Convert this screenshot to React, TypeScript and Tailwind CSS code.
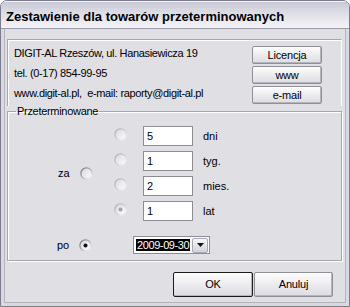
import React from "react";

function Radio({ checked = false, disabled = false }: { checked?: boolean; disabled?: boolean }) {
  const id = disabled ? "rd" : "re";
  return (
    <svg width="13" height="13" viewBox="0 0 13 13" className="shrink-0">
      <defs>
        <linearGradient id={id + "s"} x1="0" y1="0" x2="1" y2="1">
          <stop offset="0" stopColor={disabled ? "#a9a9b2" : "#6f6f7c"} />
          <stop offset="0.55" stopColor={disabled ? "#d2d2d8" : "#b8b8c2"} />
          <stop offset="1" stopColor="#ffffff" />
        </linearGradient>
        <linearGradient id={id + "f"} x1="0" y1="0" x2="1" y2="1">
          <stop offset="0" stopColor="#d6d6dc" />
          <stop offset="1" stopColor="#ffffff" />
        </linearGradient>
      </defs>
      <circle cx="6.5" cy="6.5" r="5.6" fill={`url(#${id}f)`} stroke={`url(#${id}s)`} strokeWidth="1.3" />
      {checked && <circle cx="6.5" cy="6.5" r="2" fill={disabled ? "#a4a4ac" : "#111111"} />}
    </svg>
  );
}

function Btn({ label, w, h, def = false }: { label: string; w: string; h: string; def?: boolean }) {
  return (
    <button
      className={`${w} ${h} flex items-center justify-center rounded-[2px] bg-gradient-to-b from-[#fdfdfd] to-[#dcdce2] text-[11px] text-black tracking-[-0.2px] shadow-[inset_-1px_-1px_0_#b5b5bd] ${
        def ? "border border-[#1a1a1a]" : "border border-[#8f8f98]"
      }`}
    >
      {label}
    </button>
  );
}

function Edit({ value }: { value: string }) {
  return (
    <div className="w-[50px] h-[20px] bg-white border border-[#8d8d96] flex items-center pl-[3px] text-[11px]">
      {value}
    </div>
  );
}

export default function App() {
  const rows = [
    { v: "5", u: "dni" },
    { v: "1", u: "tyg." },
    { v: "2", u: "mies." },
    { v: "1", u: "lat", on: true },
  ];

  return (
    <div
      className="w-[350px] h-[307px] flex flex-col rounded-t-[7px] border border-[#7c7c8e] bg-[#e0dfe3] overflow-hidden text-black"
      style={{ fontFamily: '"Liberation Sans", Arial, sans-serif' }}
    >
      {/* title bar */}
      <div className="h-[28px] shrink-0 flex items-center pl-[5px] pt-[4px] bg-gradient-to-b from-[#c8c8d6] via-[#e0e0e8] to-[#f4f4f7] border-b border-[#9c9cac] shadow-[inset_0_1px_0_#f4f4f8]">
        <span className="text-[13px] font-bold">Zestawienie dla towarów przeterminowanych</span>
      </div>

      {/* body */}
      <div className="flex-1 flex flex-col border-x-[3px] border-b-[3px] border-[#d9d9e1] shadow-[inset_1px_0_0_#b4b4c0,inset_-1px_0_0_#b4b4c0,inset_0_-1px_0_#b4b4c0]">
        <div className="flex-1 flex flex-col pl-[3px] pr-[4px] pt-[10px] text-[11px]">
          {/* info panel */}
          <div className="h-[67px] flex justify-between border-t border-l border-[#a6a6ae] shadow-[inset_1px_1px_0_#ffffff] border-r border-r-white">
            <div className="flex flex-col pl-[6px] pt-[3px] tracking-[-0.35px]">
              <div className="h-[20px] leading-[20px]">DIGIT-AL Rzeszów, ul. Hanasiewicza 19</div>
              <div className="h-[20px] leading-[20px]">tel. (0-17) 854-99-95</div>
              <div className="h-[20px] leading-[20px] whitespace-pre">www.digit-al.pl,  e-mail: raporty@digit-al.pl</div>
            </div>
            <div className="flex flex-col gap-[2px] pt-[6px] pr-[19px]">
              <Btn label="Licencja" w="w-[70px]" h="h-[18px]" />
              <Btn label="www" w="w-[70px]" h="h-[18px]" />
              <Btn label="e-mail" w="w-[70px]" h="h-[18px]" />
            </div>
          </div>

          {/* group box */}
          <fieldset className="mt-[-1px] h-[156px] border border-[#a6a6ae] shadow-[inset_1px_1px_0_#ffffff,1px_1px_0_#ffffff]">
            <legend className="ml-[8px] px-[1px] leading-[13px] text-[11px] tracking-[-0.3px]">Przeterminowane</legend>
            <div className="flex items-center pt-[8px]">
              <span className="ml-[50px] w-[12px]">za</span>
              <span className="ml-[10px]">
                <Radio />
              </span>
              <div className="ml-[21px] flex flex-col gap-[5px]">
                {rows.map((r) => (
                  <div key={r.u} className="h-[20px] flex items-center">
                    <span className="mb-[3px]">
                      <Radio disabled checked={!!r.on} />
                    </span>
                    <span className="ml-[16px]">
                      <Edit value={r.v} />
                    </span>
                    <span className="ml-[10px]">{r.u}</span>
                  </div>
                ))}
              </div>
            </div>
            <div className="flex items-center mt-[15px]">
              <span className="ml-[49px] w-[13px]">po</span>
              <span className="ml-[9px]">
                <Radio checked />
              </span>
              <div className="ml-[41px] w-[77px] h-[18px] bg-white border border-[#8d8d96] flex items-center justify-between pl-[2px] pr-[1px]">
                <span className="bg-black text-white h-[12px] leading-[12px] px-[1px] tracking-[-0.4px]">2009-09-30</span>
                <span className="w-[16px] h-[15px] flex items-center justify-center rounded-[2px] bg-gradient-to-b from-[#f8f8fa] to-[#d2d2da] border border-[#a8a8b2]">
                  <svg width="7" height="4" viewBox="0 0 7 4">
                    <path d="M0 0h7L3.5 4z" fill="#111" />
                  </svg>
                </span>
              </div>
            </div>
          </fieldset>

          {/* bottom buttons */}
          <div className="flex justify-end gap-[1px] pr-[9px] pt-[11px]">
            <Btn label="OK" w="w-[80px]" h="h-[25px]" def />
            <Btn label="Anuluj" w="w-[79px]" h="h-[25px]" />
          </div>
        </div>
      </div>
    </div>
  );
}
